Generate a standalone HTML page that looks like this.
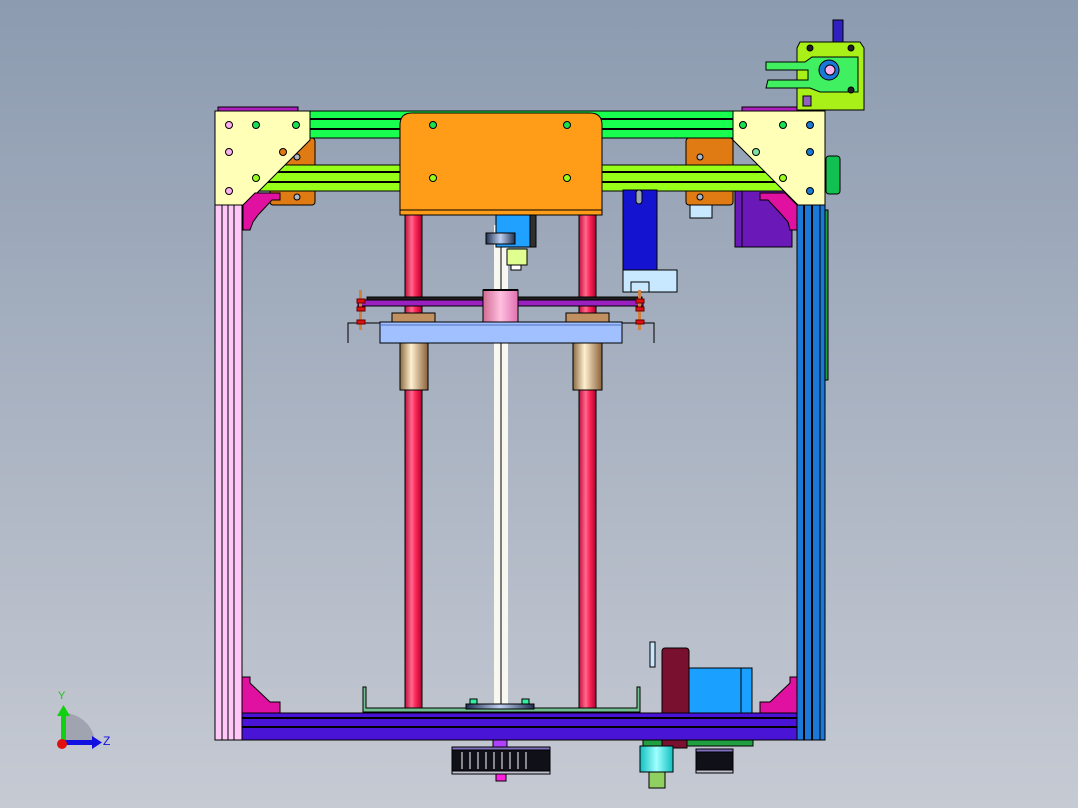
<!DOCTYPE html>
<html><head><meta charset="utf-8"><style>
html,body{margin:0;padding:0;width:1078px;height:808px;overflow:hidden}
body{background:linear-gradient(#8c9bb0,#c6cad3)}
svg{position:absolute;left:0;top:0}
</style></head><body>
<svg width="1078" height="808" viewBox="0 0 1078 808" xmlns="http://www.w3.org/2000/svg" stroke="#000" stroke-width="1">
<defs>
<linearGradient id="rod" x1="0" x2="1"><stop offset="0" stop-color="#c0103a"/><stop offset=".4" stop-color="#ff6a90"/><stop offset=".6" stop-color="#ff2a5a"/><stop offset="1" stop-color="#b00030"/></linearGradient>
<linearGradient id="brz" x1="0" x2="1"><stop offset="0" stop-color="#8a6a40"/><stop offset=".4" stop-color="#fff0d0"/><stop offset="1" stop-color="#8a6038"/></linearGradient>
<linearGradient id="pnk" x1="0" x2="1"><stop offset="0" stop-color="#d06a90"/><stop offset=".5" stop-color="#ffc0e0"/><stop offset="1" stop-color="#e070b0"/></linearGradient>
<linearGradient id="cy" x1="0" x2="1"><stop offset="0" stop-color="#10c0c0"/><stop offset=".5" stop-color="#a0ffff"/><stop offset="1" stop-color="#10c0c0"/></linearGradient>
<linearGradient id="disk" x1="0" x2="1"><stop offset="0" stop-color="#203050"/><stop offset=".5" stop-color="#c0d0f0"/><stop offset="1" stop-color="#203050"/></linearGradient>
</defs>

<!-- left pink column -->
<rect x="215" y="200" width="27" height="540" fill="#ffc8f8"/>
<line x1="222" y1="205" x2="222" y2="740"/><line x1="228" y1="205" x2="228" y2="740"/><line x1="234" y1="205" x2="234" y2="740"/>
<!-- right blue column -->
<rect x="797" y="200" width="28" height="540" fill="#1a78d8"/>
<line x1="804" y1="205" x2="804" y2="740" stroke-width="2"/><line x1="812" y1="205" x2="812" y2="740" stroke-width="2"/><line x1="820" y1="205" x2="820" y2="740"/>
<rect x="825" y="210" width="3" height="170" fill="#20a040"/>

<!-- top purple strips -->
<rect x="218" y="107" width="80" height="5" fill="#b020c0"/>
<rect x="742" y="107" width="80" height="5" fill="#b020c0"/>

<!-- green rail -->
<rect x="240" y="111" width="500" height="27" fill="#18ff50"/>
<line x1="240" y1="119" x2="740" y2="119" stroke-width="2"/><line x1="240" y1="129" x2="740" y2="129" stroke-width="2"/>
<!-- orange blocks -->
<rect x="270" y="138" width="45" height="67" rx="3" fill="#e07a12"/>
<circle cx="297" cy="157" r="3" fill="#b0b8c8"/><circle cx="297" cy="197" r="3" fill="#b0b8c8"/>
<rect x="686" y="138" width="47" height="67" rx="3" fill="#e07a12"/>
<circle cx="700" cy="157" r="3" fill="#b0b8c8"/><circle cx="700" cy="197" r="3" fill="#b0b8c8"/>
<rect x="690" y="205" width="22" height="13" fill="#c8e8ff"/>
<!-- purple block right -->
<rect x="735" y="190" width="57" height="57" fill="#6a18b8"/>
<line x1="742" y1="190" x2="742" y2="247"/>
<!-- lime rail -->
<rect x="240" y="165" width="560" height="26" fill="#98ff18"/>
<line x1="240" y1="172" x2="800" y2="172" stroke-width="2"/><line x1="240" y1="182" x2="800" y2="182" stroke-width="2"/>

<!-- blue motor mount right -->
<rect x="623" y="190" width="34" height="80" fill="#1414d0"/>
<rect x="636" y="190" width="6" height="14" rx="3" fill="#9aa6b8"/>
<rect x="623" y="270" width="54" height="22" fill="#c8e8ff"/>
<rect x="631" y="282" width="18" height="10" fill="#c8e8ff"/>

<!-- plates -->
<polygon points="215,111 310,111 310,140 245,205 215,205" fill="#ffffb8"/>
<polygon points="825,111 733,111 733,140 798,205 825,205" fill="#ffffb8"/>
<polygon points="243,205 255,193 280,193 280,200 272,200 258,215 253,222 250,230 243,230" fill="#e010a0"/>
<polygon points="797,205 785,193 760,193 760,200 768,200 782,215 788,222 790,230 797,230" fill="#e010a0"/>
<g stroke-width="1">
<circle cx="229" cy="125" r="3.5" fill="#ffb0f0"/><circle cx="256" cy="125" r="3.5" fill="#18e050"/><circle cx="296" cy="125" r="3.5" fill="#18e050"/>
<circle cx="229" cy="152" r="3.5" fill="#ffb0f0"/><circle cx="283" cy="152" r="3.5" fill="#e07a12"/>
<circle cx="256" cy="178" r="3.5" fill="#98ff18"/><circle cx="229" cy="191" r="3.5" fill="#ffb0f0"/>
<circle cx="810" cy="125" r="3.5" fill="#1a78d8"/><circle cx="783" cy="125" r="3.5" fill="#18e050"/><circle cx="743" cy="125" r="3.5" fill="#18e050"/>
<circle cx="810" cy="152" r="3.5" fill="#1a78d8"/><circle cx="756" cy="152" r="3.5" fill="#80e0a0"/>
<circle cx="783" cy="178" r="3.5" fill="#98ff18"/><circle cx="810" cy="191" r="3.5" fill="#1a78d8"/>
</g>
<rect x="826" y="156" width="14" height="38" rx="3" fill="#10c050"/>

<!-- rods -->
<rect x="405" y="215" width="17" height="493" fill="url(#rod)"/>
<rect x="579" y="215" width="17" height="493" fill="url(#rod)"/>
<rect x="494" y="225" width="14" height="480" fill="#f8f8f0" stroke="none"/>
<line x1="501" y1="240" x2="501" y2="705" stroke="#000"/>
<!-- extruder nozzle under carriage -->
<rect x="496" y="215" width="34" height="32" fill="#20a0ff"/>
<rect x="530" y="215" width="6" height="32" fill="#303030"/>
<rect x="486" y="233" width="29" height="11" fill="url(#disk)"/>
<rect x="507" y="249" width="20" height="16" fill="#e0ff90"/>
<rect x="511" y="265" width="10" height="5" fill="#fff"/>

<!-- carriage -->
<path d="M400 125 Q400 113 412 113 L590 113 Q602 113 602 125 L602 215 L400 215 Z" fill="#ff9d18"/>
<line x1="400" y1="210" x2="602" y2="210"/>
<circle cx="433" cy="125" r="3.5" fill="#18e050"/><circle cx="567" cy="125" r="3.5" fill="#18e050"/>
<circle cx="433" cy="178" r="3.5" fill="#98ff18"/><circle cx="567" cy="178" r="3.5" fill="#98ff18"/>

<!-- bed assembly -->
<rect x="367" y="297" width="275" height="3" fill="#202020"/>
<rect x="358" y="300" width="285" height="6" fill="#9a20c0"/>
<rect x="483" y="290" width="35" height="32" fill="url(#pnk)"/>
<line x1="483" y1="290" x2="518" y2="290" stroke-width="2"/>
<rect x="392" y="313" width="43" height="10" fill="#c09060"/>
<rect x="566" y="313" width="43" height="10" fill="#c09060"/>
<path d="M348 343 L348 323 L380 323" fill="none"/><path d="M654 343 L654 323 L622 323" fill="none"/>
<rect x="380" y="322" width="242" height="21" fill="#a0c0ff"/>
<line x1="380" y1="325" x2="622" y2="325" stroke="#5070c0"/>
<rect x="400" y="343" width="28" height="47" fill="url(#brz)"/>
<rect x="573" y="343" width="29" height="47" fill="url(#brz)"/>
<g fill="#d08040" stroke="none"><rect x="359" y="290" width="3" height="40"/><rect x="638" y="290" width="3" height="40"/></g>
<g fill="#e01010" stroke="#600"><rect x="357" y="299" width="8" height="4"/><rect x="357" y="307" width="8" height="4"/><rect x="357" y="320" width="8" height="4"/>
<rect x="636" y="299" width="8" height="4"/><rect x="636" y="307" width="8" height="4"/><rect x="636" y="320" width="8" height="4"/></g>

<!-- bottom -->
<polygon points="242,677 250,677 250,683 270,702 280,702 280,713 242,713" fill="#e010a0"/>
<polygon points="797,677 790,677 790,683 770,702 760,702 760,713 797,713" fill="#e010a0"/>
<path d="M363 687 L363 712 L640 712 L640 687 L637 687 L637 708 L366 708 L366 687 Z" fill="#70c090"/>
<rect x="466" y="704" width="68" height="5" fill="url(#disk)"/>
<rect x="470" y="699" width="7" height="5" fill="#30f0a0"/><rect x="522" y="699" width="7" height="5" fill="#30f0a0"/>
<rect x="662" y="648" width="27" height="70" rx="3" fill="#7a1030"/>
<rect x="650" y="642" width="5" height="25" fill="#c8e8ff"/>
<rect x="689" y="668" width="63" height="45" fill="#1aa0ff"/>
<line x1="741" y1="668" x2="741" y2="713"/>
<rect x="242" y="713" width="555" height="27" fill="#4a14d6"/>
<line x1="242" y1="718" x2="797" y2="718" stroke-width="2"/><line x1="242" y1="727" x2="797" y2="727" stroke-width="2"/>
<rect x="643" y="740" width="110" height="6" fill="#20a040"/>
<rect x="662" y="740" width="25" height="8" fill="#7a1030"/>
<!-- pulleys -->
<rect x="493" y="740" width="14" height="10" fill="#b040ff"/>
<rect x="452" y="750" width="98" height="21" fill="#101018"/>
<g stroke="#fff" stroke-width="1"><line x1="462" y1="752" x2="462" y2="769"/><line x1="470" y1="752" x2="470" y2="769"/><line x1="478" y1="752" x2="478" y2="769"/><line x1="486" y1="752" x2="486" y2="769"/><line x1="494" y1="752" x2="494" y2="769"/><line x1="502" y1="752" x2="502" y2="769"/><line x1="510" y1="752" x2="510" y2="769"/><line x1="518" y1="752" x2="518" y2="769"/><line x1="526" y1="752" x2="526" y2="769"/></g>
<rect x="452" y="747" width="98" height="3" fill="#8070c0"/><rect x="452" y="771" width="98" height="3" fill="#c0c0d0"/>
<rect x="496" y="774" width="10" height="7" fill="#ff20e0"/>
<rect x="640" y="746" width="33" height="26" fill="url(#cy)"/>
<rect x="649" y="772" width="16" height="16" fill="#90d060"/>
<rect x="696" y="752" width="37" height="18" fill="#101018"/>
<rect x="696" y="749" width="37" height="3" fill="#8070c0"/><rect x="696" y="770" width="37" height="3" fill="#c0c0d0"/>

<!-- extruder top right -->
<rect x="833" y="20" width="10" height="22" fill="#3020c0"/>
<path d="M800 42 L860 42 L864 48 L864 110 L797 110 L797 48 Z" fill="#a8f018"/>
<path d="M766 62 L805 62 L812 57 L858 57 L858 92 L820 92 L810 88 L766 88 L768 80 L808 80 L808 70 L766 70 Z" fill="#40f060"/>
<circle cx="829" cy="70" r="10" fill="#1a78d8"/><circle cx="830" cy="70" r="5" fill="#ffb0f0"/>
<circle cx="810" cy="48" r="3" fill="#202020"/><circle cx="851" cy="48" r="3" fill="#202020"/><circle cx="851" cy="90" r="3" fill="#202020"/>
<rect x="803" y="96" width="8" height="10" fill="#9060c0"/>

<!-- triad -->
<path d="M63 742 L63 713 A32 32 0 0 1 95 742 Z" fill="#a0a4b0" stroke="none"/>
<rect x="61" y="713" width="5" height="29" fill="#10d010" stroke="none"/>
<polygon points="57,716 63.5,705 70,716" fill="#10d010" stroke="none"/>
<rect x="63" y="740" width="30" height="5" fill="#1010e0" stroke="none"/>
<polygon points="92,736 102,742.5 92,749" fill="#1010e0" stroke="none"/>
<circle cx="62" cy="744" r="5" fill="#e01010" stroke="none"/>
<text x="58" y="699" font-family="Liberation Sans, sans-serif" font-size="11" fill="#20c020" stroke="none">Y</text>
<text x="103" y="745" font-family="Liberation Sans, sans-serif" font-size="12" fill="#1010e0" stroke="none">Z</text>
</svg>
</body></html>
